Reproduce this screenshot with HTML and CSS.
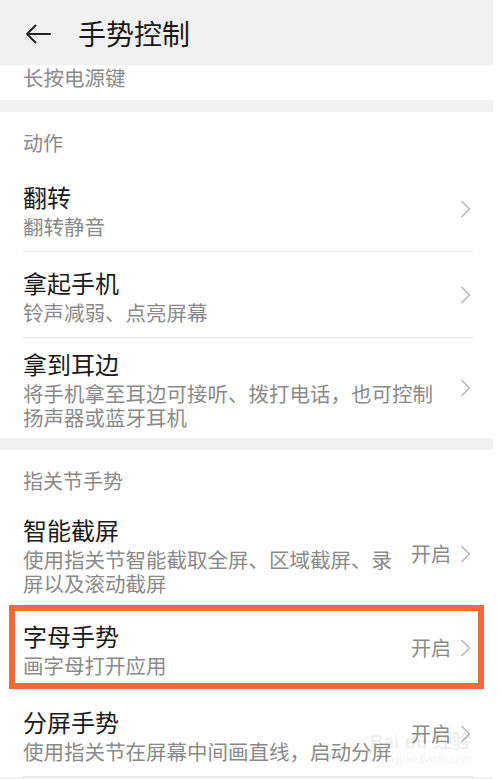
FILE: index.html
```html
<!DOCTYPE html>
<html lang="zh-CN">
<head>
    <meta charset="UTF-8">
    <meta name="viewport" content="width=device-width, initial-scale=1.0">
    <title>手势控制</title>
    <link rel="stylesheet" href="styles.css">
</head>
<body>
    <div class="screen">
        <header class="topbar">
            <svg class="back" width="26" height="20" viewBox="0 0 26 20" aria-label="返回">
                <path d="M25 10 H2 M10.5 1.5 L2 10 L10.5 18.5" fill="none" stroke="#222" stroke-width="2" stroke-linecap="round" stroke-linejoin="round"/>
            </svg>
            <h1 class="topbar-title">手势控制</h1>
        </header>

        <!-- scrolled past: only the subtitle is left -->
        <section class="group group-cut">
            <p class="row-sub">长按电源键</p>
        </section>

        <section class="group">
            <h2 class="group-label">动作</h2>
            <ul class="list">
                <li class="row">
                    <div class="row-text">
                        <span class="row-title">翻转</span>
                        <span class="row-sub">翻转静音</span>
                    </div>
                    <svg class="chevron" width="14" height="20" viewBox="0 0 14 20"><path d="M3 2.5 L10.5 10 L3 17.5" /></svg>
                </li>
                <li class="row">
                    <div class="row-text">
                        <span class="row-title">拿起手机</span>
                        <span class="row-sub">铃声减弱、点亮屏幕</span>
                    </div>
                    <svg class="chevron" width="14" height="20" viewBox="0 0 14 20"><path d="M3 2.5 L10.5 10 L3 17.5" /></svg>
                </li>
                <li class="row row-end">
                    <div class="row-text">
                        <span class="row-title">拿到耳边</span>
                        <span class="row-sub">将手机拿至耳边可接听、拨打电话，也可控制扬声器或蓝牙耳机</span>
                    </div>
                    <svg class="chevron" width="14" height="20" viewBox="0 0 14 20"><path d="M3 2.5 L10.5 10 L3 17.5" /></svg>
                </li>
            </ul>
        </section>

        <section class="group">
            <h2 class="group-label">指关节手势</h2>
            <ul class="list">
                <li class="row">
                    <div class="row-text">
                        <span class="row-title">智能截屏</span>
                        <span class="row-sub">使用指关节智能截取全屏、区域截屏、录屏以及滚动截屏</span>
                    </div>
                    <span class="row-value">开启</span>
                    <svg class="chevron" width="14" height="20" viewBox="0 0 14 20"><path d="M3 2.5 L10.5 10 L3 17.5" /></svg>
                </li>
                <li class="row row-marked">
                    <div class="row-text">
                        <span class="row-title">字母手势</span>
                        <span class="row-sub">画字母打开应用</span>
                    </div>
                    <span class="row-value">开启</span>
                    <svg class="chevron" width="14" height="20" viewBox="0 0 14 20"><path d="M3 2.5 L10.5 10 L3 17.5" /></svg>
                </li>
                <li class="row">
                    <div class="row-text">
                        <span class="row-title">分屏手势</span>
                        <span class="row-sub">使用指关节在屏幕中间画直线，启动分屏</span>
                    </div>
                    <span class="row-value">开启</span>
                    <svg class="chevron" width="14" height="20" viewBox="0 0 14 20"><path d="M3 2.5 L10.5 10 L3 17.5" /></svg>
                    <div class="watermark">
                        <span class="watermark-logo">Bai du 经验</span>
                        <span class="watermark-url">jingyan.baidu.com</span>
                    </div>
                </li>
            </ul>
        </section>
    </div>
</body>
</html>
```

FILE: styles.css
```css
* {
    margin: 0;
    padding: 0;
    box-sizing: border-box;
}

:root {
    --gap: #f1f1f1;
    --text: #1a1a1a;
    --muted: #8a8a8a;
    --line: #e9e9e9;
    --chevron: #b8b8b8;
    --mark: #f26a3a;
}

body {
    font-family: "Noto Sans CJK SC", "Noto Sans", sans-serif;
    background: #fff;
    color: var(--text);
}

.screen {
    width: 493px;
    min-height: 779px;
    background: var(--gap);
    overflow: hidden;
}

/* Title bar */
.topbar {
    height: 65px;
    display: flex;
    align-items: center;
    padding-left: 25px;
    background: var(--gap);
}

.back {
    margin-top: 3px;
    margin-right: 27px;
}

.topbar-title {
    font-size: 28px;
    font-weight: 400;
    line-height: 1;
    color: var(--text);
}

/* Groups */
.group {
    background: #fff;
    margin-bottom: 12px;
}

.group-cut {
    padding: 0 23px 11px;
}

.group-label {
    font-size: 20px;
    font-weight: 400;
    line-height: 24px;
    color: var(--muted);
    padding: 19px 23px 11px;
}

.list {
    list-style: none;
    margin: 0 20px 0 23px;
}

.row {
    position: relative;
    display: flex;
    align-items: center;
    min-height: 86px;
    padding: 9px 0;
    border-bottom: 1px solid var(--line);
}

.row-end {
    border-bottom: 0;
}

.row-text {
    flex: 1;
    display: flex;
    flex-direction: column;
    margin-right: 16px;
}

.row-title {
    font-size: 24px;
    font-weight: 400;
    line-height: 34px;
    color: var(--text);
}

.row-sub {
    font-size: 20.5px;
    line-height: 24px;
    color: var(--muted);
}

.row-value {
    font-size: 20px;
    line-height: 24px;
    color: var(--muted);
    margin-right: 8px;
}

.chevron {
    flex-shrink: 0;
}

.chevron path {
    fill: none;
    stroke: var(--chevron);
    stroke-width: 1.6;
    stroke-linecap: round;
    stroke-linejoin: round;
}

/* Orange annotation box */
.row-marked::after {
    content: '';
    position: absolute;
    top: 0;
    bottom: 1px;
    left: -14px;
    right: -11px;
    border: 6px solid var(--mark);
    pointer-events: none;
}

/* Faint site watermark */
.watermark {
    position: absolute;
    right: 2px;
    bottom: 10px;
    display: flex;
    flex-direction: column;
    align-items: flex-end;
    color: rgba(150, 150, 150, 0.16);
    font-family: "Liberation Sans", "Noto Sans CJK SC", sans-serif;
    pointer-events: none;
}

.watermark-logo {
    font-size: 19px;
    font-weight: 700;
    line-height: 20px;
}

.watermark-url {
    font-size: 11px;
    line-height: 14px;
}
```
